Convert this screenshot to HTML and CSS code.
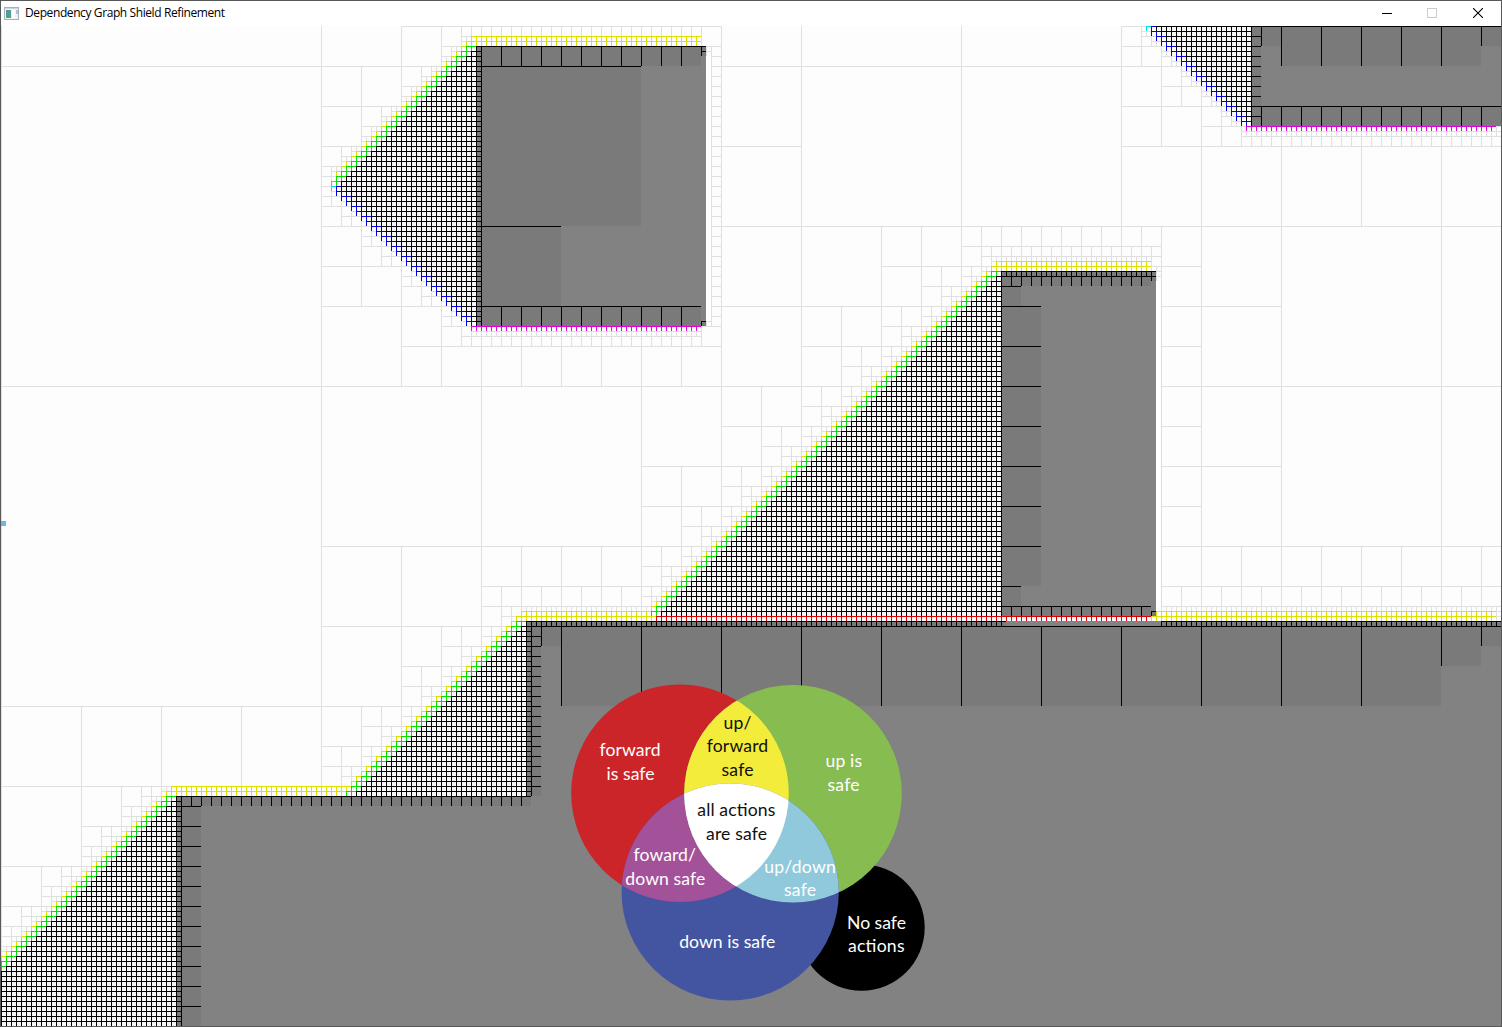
FILE: index.html
```html
<!DOCTYPE html>
<html lang="en">
<head>
<meta charset="utf-8">
<title>Dependency Graph Shield Refinement</title>
<link rel="stylesheet" href="styles.css">
</head>
<body>
<div class="window">
  <header class="titlebar">
    <svg class="app-icon" width="15" height="13" viewBox="0 0 15 13">
      <defs><linearGradient id="pane" x1="0" y1="0" x2="0.6" y2="1"><stop offset="0" stop-color="#5b8fb5"/><stop offset="1" stop-color="#4fa878"/></linearGradient></defs>
      <rect width="15" height="13" fill="#a9b0b4"/>
      <rect x="1" y="1" width="13" height="11" fill="#f1f3f4"/>
      <rect x="1" y="1" width="13" height="1" fill="#cfd4d7"/>
      <rect x="2" y="3" width="5" height="8" fill="url(#pane)"/>
      <rect x="8" y="3" width="3" height="8" fill="#fff"/>
      <rect x="12" y="3" width="2" height="4" fill="#a8c4dc"/>
    </svg>
    <h1 class="title">Dependency Graph Shield Refinement</h1>
    <div class="controls">
      <svg class="minimize" width="10" height="10" viewBox="0 0 10 10"><path d="M0 5.5H10" stroke="#000"/></svg>
      <svg width="10" height="10" viewBox="0 0 10 10"><rect x=".5" y=".5" width="9" height="9" fill="none" stroke="#ccc"/></svg>
      <svg width="10" height="10" viewBox="0 0 10 10"><path d="M0 0L10 10M10 0L0 10" stroke="#000" stroke-width="1.1"/></svg>
    </div>
  </header>
  <svg class="world" width="1500" height="1000" viewBox="1 26 1500 1000">
    <g id="cells" shape-rendering="crispEdges"></g>
    <rect x="1" y="521" width="5" height="5" fill="#6cb8e8"/>
    <defs>
      <clipPath id="forward"><circle cx="680" cy="793.3" r="108.8"/></clipPath>
      <clipPath id="up"><circle cx="793" cy="793.8" r="108.8"/></clipPath>
    </defs>
    <g class="legend">
      <circle cx="861.5" cy="927.5" r="63.2" fill="#000"/>
      <circle cx="680" cy="793.3" r="108.8" fill="#cc2529"/>
      <circle cx="793" cy="793.8" r="108.8" fill="#87bc50"/>
      <circle cx="730.2" cy="892" r="108.6" fill="#4355a0"/>
      <g clip-path="url(#forward)">
        <circle cx="793" cy="793.8" r="108.8" fill="#f3ec3b"/>
        <circle cx="730.2" cy="892" r="108.6" fill="#a35199"/>
      </g>
      <g clip-path="url(#up)">
        <circle cx="730.2" cy="892" r="108.6" fill="#90c9db"/>
        <g clip-path="url(#forward)"><circle cx="730.2" cy="892" r="108.6" fill="#fff"/></g>
      </g>
      <g class="label light">
        <text x="599.5" y="755.7" textLength="61">forward</text>
        <text x="606.5" y="779.5" textLength="48">is safe</text>
        <text x="825.5" y="767.4" textLength="36.5">up is</text>
        <text x="827.5" y="791.3" textLength="32">safe</text>
        <text x="633.5" y="861" textLength="62.5">foward/</text>
        <text x="625.3" y="885" textLength="80">down safe</text>
        <text x="764.3" y="872.7" textLength="71.5">up/down</text>
        <text x="784" y="896.3" textLength="32">safe</text>
        <text x="679.2" y="947.5" textLength="96">down is safe</text>
        <text x="847" y="929" textLength="59">No safe</text>
        <text x="848" y="952.4" textLength="56.5">actions</text>
      </g>
      <g class="label dark">
        <text x="723.5" y="729" textLength="28">up/</text>
        <text x="706.7" y="752.3" textLength="61.5">forward</text>
        <text x="721.5" y="775.8" textLength="32">safe</text>
        <text x="697.3" y="816.4" textLength="78">all actions</text>
        <text x="706" y="840" textLength="61">are safe</text>
      </g>
    </g>
  </svg>
</div>
<script src="world.js"></script>
</body>
</html>
```
FILE: styles.css
```css
* { box-sizing: border-box; }

body {
  margin: 0;
  background: #555;
}

.window {
  display: flex;
  flex-direction: column;
  width: 1502px;
  height: 1027px;
  padding: 1px;
  background: #585858;
  overflow: hidden;
}

.titlebar {
  display: flex;
  align-items: center;
  flex: none;
  height: 25px;
  padding: 0 18px 1px 3px;
  background: #fff;
}

.title {
  margin: 0 0 0 6px;
  font: 400 12px/24px "Open Sans", "Noto Sans", sans-serif;
  letter-spacing: -0.4px;
  white-space: nowrap;
  color: #000;
}

.controls {
  display: flex;
  gap: 36px;
  margin-left: auto;
}

.minimize { margin-right: -1px; }

.controls svg,
.app-icon,
.world {
  display: block;
}

.world {
  flex: none;
  background: #fff;
}

.label {
  font-family: Lato, "Open Sans", sans-serif;
  font-size: 17.6px;
}

.light { fill: #fff; }
.dark { fill: #111; }
```
FILE: world.js
```js
// Quadtree view: leaves are drawn as a fill plus a one-pixel left and top edge.
const LEFT = 1, TOP = 26, RIGHT = 1501, BOTTOM = 1026, UNIT = 5;
const COLORS = { Y: '#e0e000', G: '#00e000', B: '#0000e0', M: '#e000e0', C: '#00e0e0', R: '#e00000', K: '#000', L: '#e0e0e0' };

const OBSTACLES = [
  [476, 46, 706, 326], [1001, 271, 1156, 616], [1251, 26, 1501, 126],
  [526, 621, 1501, 1026], [176, 796, 1501, 1026]
];

// Rising edge: yellow, two greens, then the dense unsafe interior up to xEnd.
function slope(x, sum, xEnd, y) {
  const start = sum - y;
  if (x < start || x >= xEnd) return null;
  if (x === start) return 'Y';
  return x <= start + 10 ? 'G' : 'K';
}

function label(x, y) {
  // Outside the right edge the world continues like its last column.
  if (x >= RIGHT) x = RIGHT - UNIT;
  if (y < TOP) return x >= 1121 ? 'O' : 'L';
  if (x < LEFT || y >= BOTTOM) return 'O';
  for (const [a, b, c, d] of OBSTACLES) if (x >= a && x < c && y >= b && y < d) return 'O';
  let r = null;
  if (y === 36 && x >= 471 && x < 701) return 'Y';
  if (y === 41 && x >= 466 && x < 701) return 'Y';
  if (y >= 46 && y <= 176) { r = slope(x, 507, 476, y); if (y === 176 && x === 331) r = null; }
  if (y === 181 && x >= 331 && x < 476) r = x === 331 ? 'C' : x === 336 ? 'G' : 'K';
  if (y === 186 && x >= 331 && x < 476) r = x === 331 ? 'C' : x === 336 ? 'B' : 'K';
  if (y >= 191 && y < 326 && x >= y + 145 && x < 476) r = x <= y + 150 ? 'B' : 'K';
  if (y === 326 && x >= 471 && x < 701) r = 'M';
  if (x === 706 && y >= 56 && y < 321) return 'N';

  if (y === 261 && x >= 996 && x < 1151) return 'Y';
  if (y === 266 && x >= 991 && x < 1151) return 'Y';
  if (y >= 271 && y < 616) r = r || slope(x, 1257, 1001, y);
  if (x === 1156 && y >= 281 && y < 611) return 'N';

  if (y === 611 && ((x >= 521 && x < 651) || (x >= 1156 && x < 1496))) return 'Y';
  if (y === 616) {
    if (x >= 656 && x < 1151) return 'R';
    if (x >= 516 && x < 1496) return 'Y';
  }
  if (y >= 621 && y < 796) r = r || slope(x, 1132, 526, y);
  if (y === 786 && x >= 171 && x < 346) return 'Y';
  if (y === 791 && x >= 166 && x < 346) return 'Y';
  if (y >= 796) r = r || slope(x, 957, 176, y);

  if (y === 26 && x === 1146) return 'C';
  if (y < 126 && x >= Math.max(1151, y + 1120) && x < 1251) return x <= y + 1125 ? 'B' : 'K';
  if (y === 126 && x >= 1246 && x < 1496) return 'M';
  return r || 'L';
}

const paths = {};
function fill(color, x, y, w, h) {
  (paths[color] = paths[color] || []).push(`M${x} ${y}h${w}v${h}h${-w}z`);
}
function cell(x, y, s, body, line) {
  fill(body, x, y, s, s);
  fill(line, x, y, s, 1);
  fill(line, x, y, 1, s);
}

function uniform(x, y, s) {
  const first = label(x, y);
  for (let j = y; j < y + s; j += UNIT)
    for (let i = x; i < x + s; i += UNIT)
      if (label(i, j) !== first) return null;
  return first;
}

function visit(x, y, s) {
  if (x >= RIGHT || y >= BOTTOM || y + s <= TOP) return;
  const kind = s <= 320 ? uniform(x, y, s) : null;
  if (kind === 'O' || kind === 'N') return;
  if (kind && (kind === 'L' || s === UNIT)) {
    cell(x, y, s, kind === 'K' ? '#f6f6f6' : '#fdfdfd', COLORS[kind]);
    return;
  }
  const h = s / 2;
  visit(x, y, h); visit(x + h, y, h); visit(x, y + h, h); visit(x + h, y + h, h);
}

// Order matters: bodies first, edges after.
paths['#fdfdfd'] = [];
paths['#f6f6f6'] = [];
paths['#828282'] = [];
paths['#7a7a7a'] = [];
for (const [a, b, c, d] of OBSTACLES) fill('#828282', a, b, c - a, d - b);
visit(1, -254, 2560);

// Blocked leaves: x range, y range, leaf size.
const BLOCKED = [
  [476, 481, 46, 326, 5], [481, 701, 46, 66, 20], [701, 706, 46, 56, 5], [481, 641, 66, 226, 160],
  [481, 561, 226, 306, 80], [481, 701, 306, 326, 20], [701, 706, 321, 326, 5],
  [1001, 1156, 271, 276, 5], [1001, 1151, 276, 286, 10], [1151, 1156, 276, 281, 5], [1001, 1021, 286, 306, 20],
  [1001, 1041, 306, 586, 40], [1001, 1021, 586, 606, 20], [1001, 1151, 606, 616, 10], [1151, 1156, 611, 616, 5],
  [526, 1006, 621, 626, 5], [1161, 1501, 621, 626, 5], [526, 531, 626, 796, 5], [531, 541, 626, 796, 10],
  [541, 561, 626, 646, 20], [561, 1441, 626, 706, 80], [1441, 1481, 626, 666, 40], [1481, 1501, 626, 646, 20],
  [176, 181, 796, 1026, 5], [181, 531, 796, 806, 10], [181, 201, 806, 1026, 20],
  [1251, 1261, 26, 126, 10], [1261, 1281, 26, 46, 20], [1281, 1481, 26, 66, 40], [1481, 1501, 26, 46, 20],
  [1261, 1501, 106, 126, 20]
];
for (const [x0, x1, y0, y1, s] of BLOCKED)
  for (let y = y0; y < y1; y += s)
    for (let x = x0; x < x1; x += s) cell(x, y, s, '#7a7a7a', '#000');
fill('#000', 1006, 626, 155, 1);

const group = document.getElementById('cells');
for (const color of Object.keys(paths)) {
  const p = document.createElementNS('http://www.w3.org/2000/svg', 'path');
  p.setAttribute('fill', color);
  p.setAttribute('d', paths[color].join(''));
  group.appendChild(p);
}
```
